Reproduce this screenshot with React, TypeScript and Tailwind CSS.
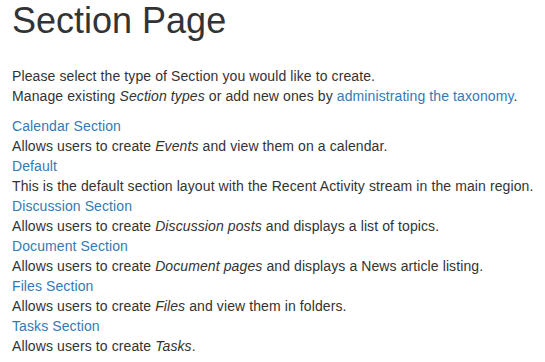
export default function App() {
  const items: { title: string; desc: React.ReactNode }[] = [
    { title: "Calendar Section", desc: <>Allows users to create <em>Events</em> and view them on a calendar.</> },
    { title: "Default", desc: <>This is the default section layout with the Recent Activity stream in the main region.</> },
    { title: "Discussion Section", desc: <>Allows users to create <em>Discussion posts</em> and displays a list of topics.</> },
    { title: "Document Section", desc: <>Allows users to create <em>Document pages</em> and displays a News article listing.</> },
    { title: "Files Section", desc: <>Allows users to create <em>Files</em> and view them in folders.</> },
    { title: "Tasks Section", desc: <>Allows users to create <em>Tasks</em>.</> },
  ];
  return (
    <div className="bg-white w-[545px] h-[362px] pt-[1px] pl-[12px] pr-[6px] whitespace-nowrap text-[#333] text-[14px] leading-[20px] tracking-[0.1px] font-['Liberation_Sans',Arial,sans-serif]">
      <h1 className="text-[36px] leading-[39.6px] m-0 font-normal tracking-normal">Section Page</h1>
      <p className="mt-[25px] mb-[10px]">
        Please select the type of Section you would like to create.
        <br />
        Manage existing <em>Section types</em> or add new ones by{" "}
        <a className="text-[#337ab7]">administrating the taxonomy</a>.
      </p>
      <dl>
        {items.map((it) => (
          <div key={it.title}>
            <dt className="font-normal">
              <a className="text-[#337ab7]">{it.title}</a>
            </dt>
            <dd className="m-0">{it.desc}</dd>
          </div>
        ))}
      </dl>
    </div>
  );
}
